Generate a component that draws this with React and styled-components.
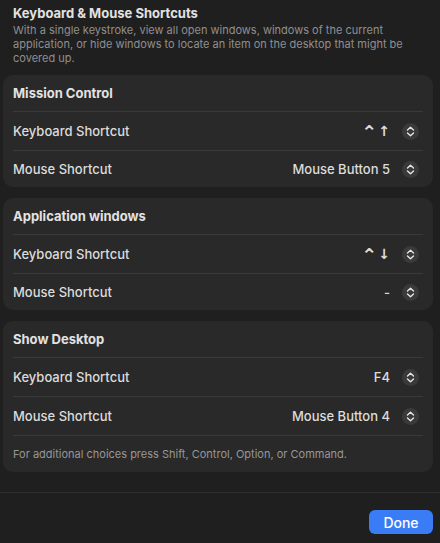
import React from 'react';
import styled, { createGlobalStyle } from 'styled-components';

const GlobalStyle = createGlobalStyle`
  html, body {
    margin: 0;
    padding: 0;
    background-color: #1f1f1f;
  }
  body {
    font-family: Inter, "Noto Sans", "DejaVu Sans", sans-serif;
    -webkit-font-smoothing: antialiased;
  }
`;

// ===== Styled Components =====

const Sheet = styled.div`
  width: 440px;
  height: 543px;
  display: flex;
  flex-direction: column;
  background-color: #1f1f1f;
  color: #dedede;
  box-sizing: border-box;
`;

const Content = styled.div`
  flex: 1;
  padding: 5px 7px 0 3px;
  display: flex;
  flex-direction: column;
`;

const Intro = styled.div`
  padding: 0 10px;
  margin-bottom: 10px;
`;

const Title = styled.h2`
  margin: 0 0 2px;
  font-size: 13px;
  line-height: 16px;
  font-weight: 700;
  color: #e2e2e2;
`;

const Description = styled.p`
  margin: 0;
  font-size: 11px;
  line-height: 14px;
  color: #8f8f8f;
`;

const Card = styled.section`
  background-color: #292929;
  border-radius: 10px;
  padding: 0 10px;
  margin-bottom: 11px;
`;

const CardHeader = styled.div`
  height: 36px;
  display: flex;
  align-items: center;
  font-size: 13px;
  font-weight: 700;
  color: #e2e2e2;
`;

const Row = styled.div`
  height: ${(p) => (p.$last ? '36px' : '38px')};
  display: flex;
  align-items: center;
  justify-content: space-between;
  border-top: 1px solid #3a3a3a;
  font-size: 13px;
  font-weight: 500;
`;

const Label = styled.span`
  color: #dcdcdc;
`;

const Value = styled.div`
  display: flex;
  align-items: center;
  gap: 12px;
  color: #dcdcdc;
  padding-right: 4px;
`;

const Keys = styled.span`
  display: flex;
  align-items: center;
  gap: 1px;
  height: 17px;
  font-family: "DejaVu Sans", Inter, sans-serif;
  font-weight: 700;
`;

const Control = styled.span`
  font-size: 19px;
  line-height: 17px;
  margin-top: 3px;
`;

const Arrow = styled.span`
  font-size: 14px;
  line-height: 17px;
`;

const Stepper = styled.span`
  width: 17px;
  height: 17px;
  border-radius: 50%;
  background-color: #3a3a3a;
  display: flex;
  align-items: center;
  justify-content: center;
`;

const Note = styled.div`
  height: 36px;
  display: flex;
  align-items: center;
  border-top: 1px solid #3a3a3a;
  font-size: 11px;
  color: #979797;
`;

const Footer = styled.footer`
  height: 51px;
  border-top: 1px solid #2f2f2f;
  display: flex;
  align-items: center;
  justify-content: flex-end;
  padding: 0 7px 0 0;
  box-sizing: border-box;
`;

const DoneButton = styled.button`
  width: 64px;
  height: 24px;
  margin-top: 8px;
  border: none;
  border-radius: 6px;
  background-color: #3a7cf6;
  color: #ffffff;
  font-family: Inter, "Noto Sans", sans-serif;
  font-size: 14px;
  font-weight: 500;
  cursor: pointer;
`;

// ===== Pieces =====

const StepperIcon = () => (
  <Stepper>
    <svg width="9" height="11" viewBox="0 0 9 11" fill="none">
      <path d="M1.5 4 L4.5 1.2 L7.5 4" stroke="#e6e6e6" strokeWidth="1.4" strokeLinecap="round" strokeLinejoin="round" />
      <path d="M1.5 7 L4.5 9.8 L7.5 7" stroke="#e6e6e6" strokeWidth="1.4" strokeLinecap="round" strokeLinejoin="round" />
    </svg>
  </Stepper>
);

const sections = [
  { title: 'Mission Control', arrow: '↑', mouse: 'Mouse Button 5' },
  { title: 'Application windows', arrow: '↓', mouse: '-' },
  { title: 'Show Desktop', keyboard: 'F4', mouse: 'Mouse Button 4', note: true },
];

// ===== Main Component =====

function App() {
  return (
    <>
      <GlobalStyle />
      <Sheet>
        <Content>
          <Intro>
            <Title>Keyboard &amp; Mouse Shortcuts</Title>
            <Description>
              With a single keystroke, view all open windows, windows of the current
              application, or hide windows to locate an item on the desktop that might be
              covered up.
            </Description>
          </Intro>

          {sections.map((s) => (
            <Card key={s.title}>
              <CardHeader>{s.title}</CardHeader>
              <Row>
                <Label>Keyboard Shortcut</Label>
                <Value>
                  {s.arrow ? (
                    <Keys>
                      <Control>⌃</Control>
                      <Arrow>{s.arrow}</Arrow>
                    </Keys>
                  ) : (
                    <span>{s.keyboard}</span>
                  )}
                  <StepperIcon />
                </Value>
              </Row>
              <Row $last={!s.note}>
                <Label>Mouse Shortcut</Label>
                <Value>
                  <span>{s.mouse}</span>
                  <StepperIcon />
                </Value>
              </Row>
              {s.note && (
                <Note>For additional choices press Shift, Control, Option, or Command.</Note>
              )}
            </Card>
          ))}
        </Content>

        <Footer>
          <DoneButton>Done</DoneButton>
        </Footer>
      </Sheet>
    </>
  );
}

export default App;
